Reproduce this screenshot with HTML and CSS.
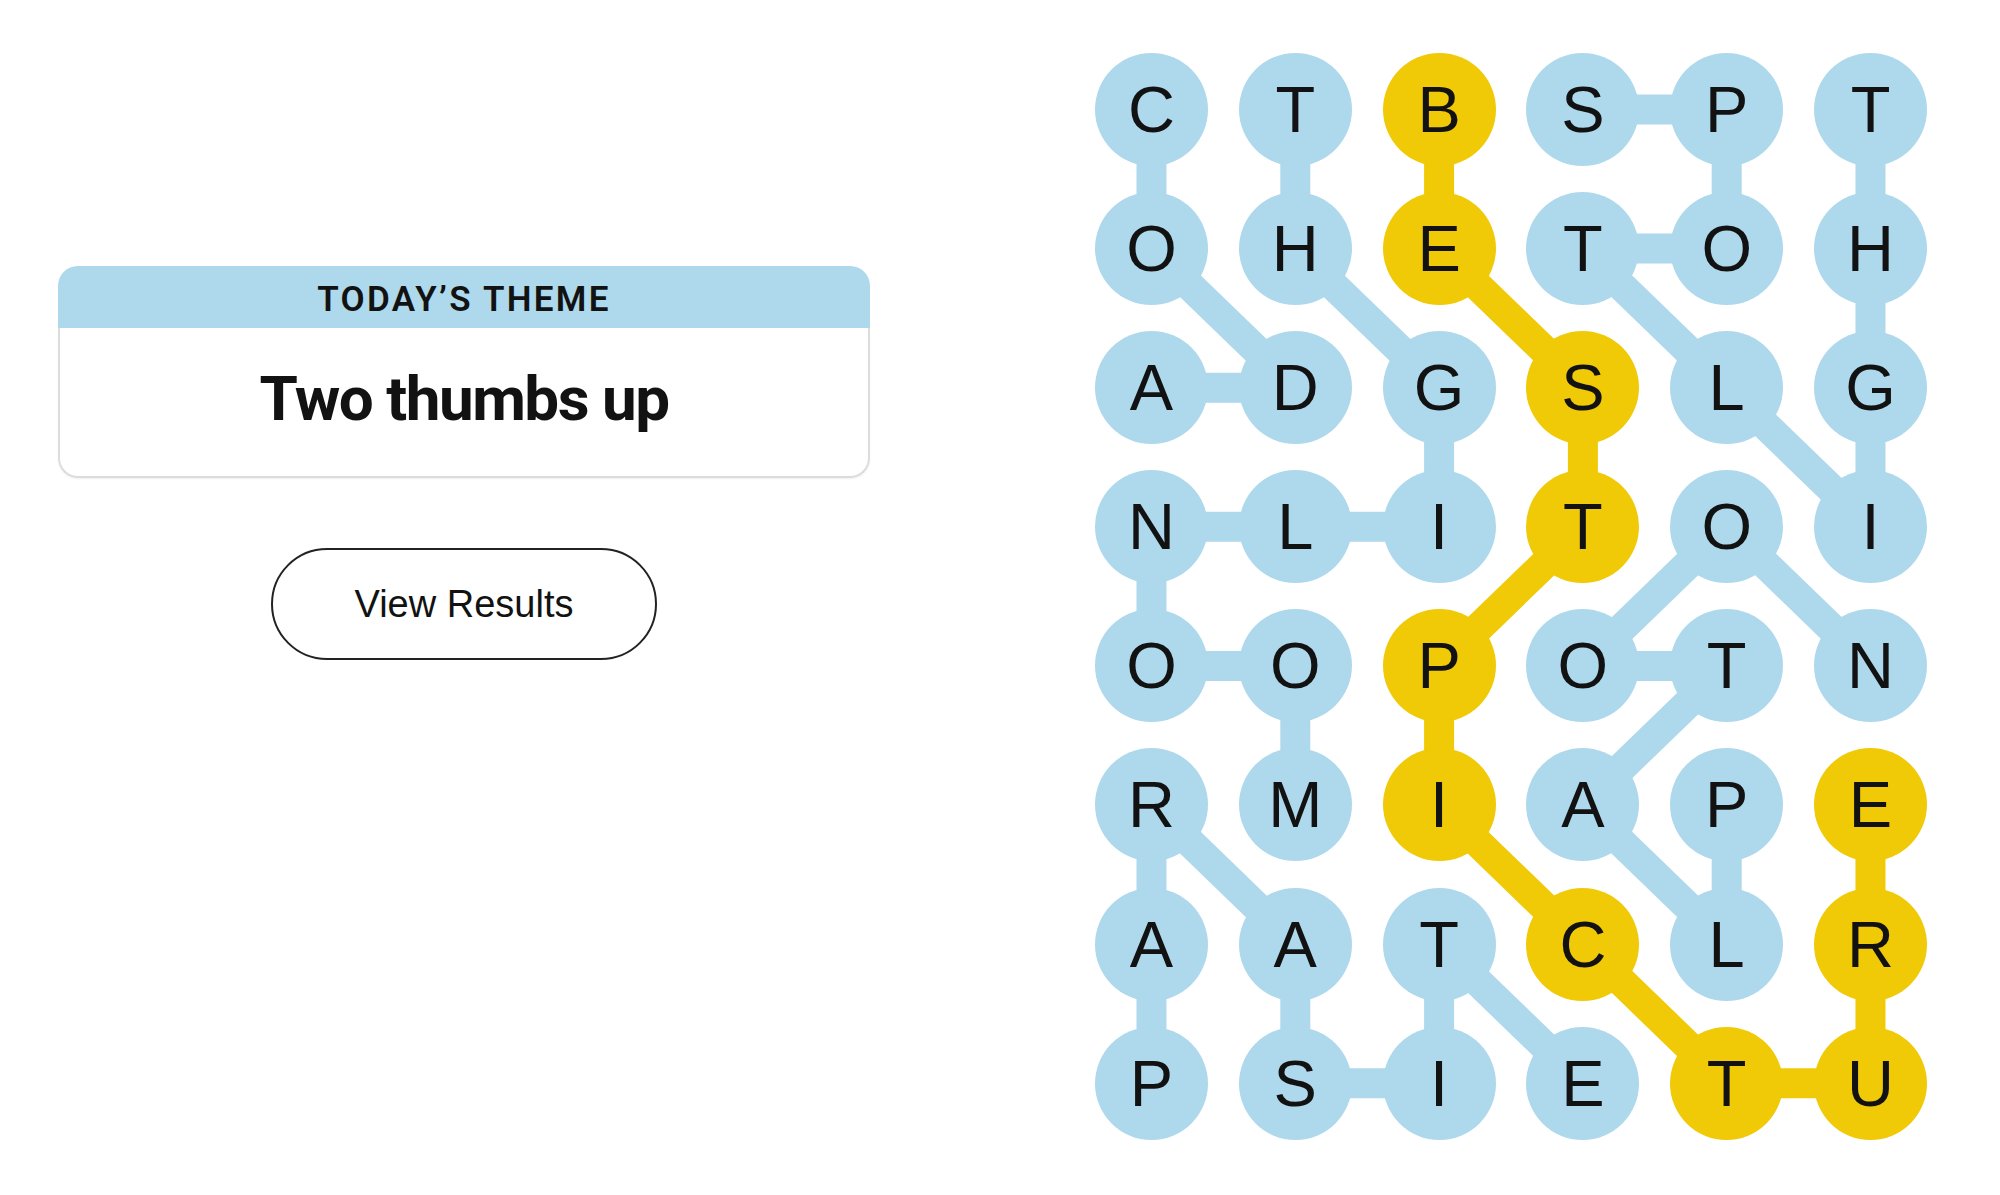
FILE: index.html
```html
<!DOCTYPE html>
<html lang="en">
<head>
    <meta charset="UTF-8">
    <meta name="viewport" content="width=device-width, initial-scale=1.0">
    <title>Strands</title>
    <link rel="stylesheet" href="styles.css">
</head>
<body>

<div class="game">
    <div class="theme-col">
        <div class="theme-card">
            <div class="theme-head">TODAY’S THEME</div>
            <div class="theme-body">Two thumbs up</div>
        </div>
        <button class="results-btn">View Results</button>
    </div>

    <div class="board">
        <!-- word paths, drawn in grid units (1 = one column / one row) -->
        <svg class="links" viewBox="0 0 832 1086.7" preserveAspectRatio="none">
            <g transform="translate(56.5 56.5) scale(143.8 139.1)" fill="none" stroke-width="30">
                <g stroke="#aed8eb">
                    <polyline vector-effect="non-scaling-stroke" points="0,0 0,1 1,2 0,2"/>
                    <polyline vector-effect="non-scaling-stroke" points="1,5 1,4 0,4 0,3 1,3 2,3 2,2 1,1 1,0"/>
                    <polyline vector-effect="non-scaling-stroke" points="0,7 0,6 0,5 1,6 1,7 2,7 2,6 3,7"/>
                    <polyline vector-effect="non-scaling-stroke" points="3,0 4,0 4,1 3,1 4,2 5,3 5,2 5,1 5,0"/>
                    <polyline vector-effect="non-scaling-stroke" points="4,5 4,6 3,5 4,4 3,4 4,3 5,4"/>
                </g>
                <polyline stroke="#f0c907" vector-effect="non-scaling-stroke" points="2,0 2,1 3,2 3,3 2,4 2,5 3,6 4,7 5,7 5,6 5,5"/>
            </g>
        </svg>

        <div class="cell">C</div><div class="cell">T</div><div class="cell span">B</div><div class="cell">S</div><div class="cell">P</div><div class="cell">T</div>
        <div class="cell">O</div><div class="cell">H</div><div class="cell span">E</div><div class="cell">T</div><div class="cell">O</div><div class="cell">H</div>
        <div class="cell">A</div><div class="cell">D</div><div class="cell">G</div><div class="cell span">S</div><div class="cell">L</div><div class="cell">G</div>
        <div class="cell">N</div><div class="cell">L</div><div class="cell">I</div><div class="cell span">T</div><div class="cell">O</div><div class="cell">I</div>
        <div class="cell">O</div><div class="cell">O</div><div class="cell span">P</div><div class="cell">O</div><div class="cell">T</div><div class="cell">N</div>
        <div class="cell">R</div><div class="cell">M</div><div class="cell span">I</div><div class="cell">A</div><div class="cell">P</div><div class="cell span">E</div>
        <div class="cell">A</div><div class="cell">A</div><div class="cell">T</div><div class="cell span">C</div><div class="cell">L</div><div class="cell span">R</div>
        <div class="cell">P</div><div class="cell">S</div><div class="cell">I</div><div class="cell">E</div><div class="cell span">T</div><div class="cell span">U</div>
    </div>
</div>

</body>
</html>
```

FILE: styles.css
```css
/* Strands - finished puzzle view */
body {
    margin: 0;
    font-family: 'Liberation Sans', Arial, sans-serif;
    color: #121212;
    background-color: #fff;
}

.game {
    display: flex;
    align-items: flex-start;
    padding: 53px 0 0 58px;
    gap: 225px;
}

/* left column: theme card + results button */
.theme-col {
    width: 812px;
    display: flex;
    flex-direction: column;
    align-items: center;
    padding-top: 213px;
}

.theme-card {
    width: 100%;
}

.theme-head {
    background-color: #aed8eb;
    border-radius: 20px 20px 0 0;
    height: 62px;
    box-sizing: border-box;
    padding-top: 4px;
    display: flex;
    align-items: center;
    justify-content: center;
    font-family: Roboto, 'Liberation Sans', sans-serif;
    font-size: 35px;
    font-weight: 600;
    letter-spacing: 2.3px;
}

.theme-body {
    height: 150px;
    border: 2px solid #dcdcdc;
    border-top: none;
    border-radius: 0 0 20px 20px;
    box-shadow: 0 1px 2px rgba(0, 0, 0, 0.06);
    display: flex;
    align-items: center;
    justify-content: center;
    padding-bottom: 8px;
    box-sizing: border-box;
    font-family: Roboto, 'Liberation Sans', sans-serif;
    font-size: 62px;
    font-weight: 700;
    letter-spacing: -1.5px;
}

.results-btn {
    margin-top: 70px;
    width: 386px;
    height: 112px;
    border: 2.5px solid #222;
    border-radius: 56px;
    background-color: #fff;
    font-family: 'Liberation Sans', Arial, sans-serif;
    font-size: 38px;
    color: #121212;
    cursor: pointer;
}

/* letter board */
.board {
    position: relative;
    display: grid;
    grid-template-columns: repeat(6, 113px);
    grid-auto-rows: 113px;
    column-gap: 30.8px;
    row-gap: 26.1px;
}

.links {
    position: absolute;
    top: 0;
    left: 0;
    width: 100%;
    height: 100%;
    overflow: visible;
}

.cell {
    position: relative;
    border-radius: 50%;
    background-color: #aed8eb;
    display: flex;
    align-items: center;
    justify-content: center;
    font-size: 65px;
    line-height: 1;
}

.cell.span {
    background-color: #f0c907;
}
```
